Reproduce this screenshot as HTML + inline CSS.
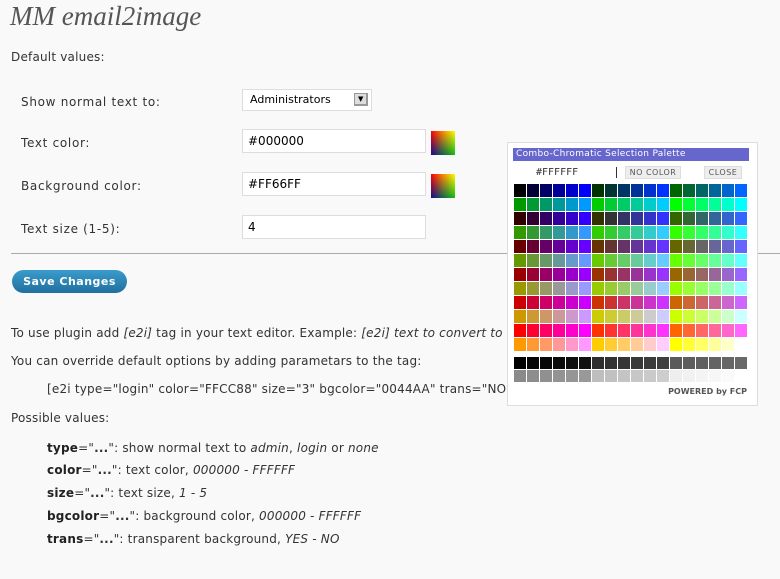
<!DOCTYPE html>
<html><head><meta charset="utf-8"><style>
body{margin:0;width:780px;height:579px;background:#f9f9f9;font-family:"DejaVu Sans","Liberation Sans",sans-serif;color:#333;position:relative;overflow:hidden}
.a{position:absolute;white-space:nowrap}
h1{position:absolute;left:10px;top:1px;margin:0;font:italic 27px "Liberation Serif",serif;color:#555}
.t{font-size:12px;letter-spacing:0.2px}
.l{font-size:12px;letter-spacing:0.7px}
.in{position:absolute;left:242px;width:182px;height:22px;background:#fff;border:1px solid #ddd;font-size:12px;color:#000;line-height:22px;text-indent:5px}
.sw{position:absolute;left:431px;width:24px;height:24px;background:linear-gradient(to right,#1a0a90,#10c010)}
.sw div{width:100%;height:100%;background:linear-gradient(to right,#f00,#f80 50%,#ff0);-webkit-mask-image:linear-gradient(#000,transparent);mask-image:linear-gradient(#000,transparent)}
#pal{position:absolute;left:507px;top:142px;width:249px;height:262px;background:#fff;border:1px solid #ddd}
table{border-collapse:separate;border-spacing:1px;position:absolute;left:5px}
td{width:12px;height:13px;padding:0}
.b{font-weight:bold;color:#222}
i{color:#333}
</style></head><body>
<h1>MM email2image</h1>
<div class="a t" style="left:11px;top:50px">Default values:</div>
<div class="a l" style="left:21px;top:95px">Show normal text to:</div>
<div class="a l" style="left:21px;top:136px">Text color:</div>
<div class="a l" style="left:21px;top:179px">Background color:</div>
<div class="a l" style="left:21px;top:222px">Text size (1-5):</div>
<div class="a" style="left:242px;top:89px;width:128px;height:20px;border:1px solid #ddd;background:#fff;font-size:11px;line-height:20px;text-indent:7px;color:#000">Administrators<div style="position:absolute;right:3px;top:3px;width:14px;height:13px;background:#ddd;border:1px solid #999;border-width:1px 2px 2px 1px;box-sizing:border-box;font-size:7px;line-height:11px;text-indent:3px">▼</div></div>
<div class="in" style="top:129px">#000000</div>
<div class="in" style="top:172px">#FF66FF</div>
<div class="in" style="top:215px">4</div>
<div class="sw" style="top:131px"><div></div></div>
<div class="sw" style="top:174px"><div></div></div>
<div class="a" style="left:11px;top:253px;width:769px;height:1px;background:#aaa"></div>
<div class="a" style="left:12px;top:270px;width:115px;height:23px;border-radius:12px;background:linear-gradient(#3a9ccb,#1f6f9e);color:#fff;font-weight:bold;font-size:11px;line-height:23px;text-align:center;letter-spacing:0.5px">Save Changes</div>
<div class="a t" style="left:11px;top:326px">To use plugin add <i>[e2i]</i> tag in your text editor. Example: <i>[e2i] text to convert to</i></div>
<div class="a t" style="left:11px;top:354px">You can override default options by adding parametars to the tag:</div>
<div class="a t" style="left:47px;top:382px">[e2i type="login" color="FFCC88" size="3" bgcolor="0044AA" trans="NO</div>
<div class="a t" style="left:11px;top:411px">Possible values:</div>
<div class="a t" style="left:47px;top:441px"><span class="b">type</span>="<b>...</b>": show normal text to <i>admin</i>, <i>login</i> or <i>none</i></div>
<div class="a t" style="left:47px;top:463px"><span class="b">color</span>="<b>...</b>": text color, <i>000000 - FFFFFF</i></div>
<div class="a t" style="left:47px;top:486px"><span class="b">size</span>="<b>...</b>": text size, <i>1 - 5</i></div>
<div class="a t" style="left:47px;top:509px"><span class="b">bgcolor</span>="<b>...</b>": background color, <i>000000 - FFFFFF</i></div>
<div class="a t" style="left:47px;top:532px"><span class="b">trans</span>="<b>...</b>": transparent background, <i>YES - NO</i></div>

<div id="pal">
<div class="a" style="left:5px;top:5px;width:236px;height:13px;background:#6666cc;color:#fff;font-size:9px;line-height:13px;text-indent:3px;letter-spacing:0.3px">Combo-Chromatic Selection Palette</div>
<div class="a" style="left:28px;top:24px;font:10px 'DejaVu Sans Mono',monospace;color:#333">#FFFFFF</div>
<div class="a" style="left:108px;top:24px;width:1px;height:11px;background:#333"></div>
<div class="a" style="left:117px;top:23px;width:56px;height:13px;background:#eee;border:1px solid #ddd;box-sizing:border-box;font-size:8px;line-height:11px;text-align:center;color:#555;letter-spacing:0.5px">NO COLOR</div>
<div class="a" style="left:196px;top:23px;width:38px;height:13px;background:#eee;border:1px solid #ddd;box-sizing:border-box;font-size:8px;line-height:11px;text-align:center;color:#555;letter-spacing:0.5px">CLOSE</div>
<table id="g" style="top:40px"></table>
<table id="h" style="top:213px"></table>
<div class="a" style="right:10px;top:244px;font-size:8px;color:#555;font-weight:bold">POWERED by FCP</div>
</div>
<script>
var v=['00','33','66','99','CC','FF'],g=document.getElementById('g'),s='';
for(var r=0;r<6;r++)for(var hh=0;hh<2;hh++){s+='<tr>';for(var k=0;k<3;k++)for(var b=0;b<6;b++)s+='<td style="background:#'+v[r]+v[hh*3+k]+v[b]+'"></td>';s+='</tr>';}
g.innerHTML=s;
var r1=[0,5,8,11,14,17,47,50,53,56,59,62,90,93,96,99,102,105],r2=[138,141,144,147,150,153,190,193,196,199,202,205,238,241,244,247,250,255];
function row(a){var t='<tr>';a.forEach(function(x){t+='<td style="height:12px;background:rgb('+x+','+x+','+x+')"></td>'});return t+'</tr>';}
document.getElementById('h').innerHTML=row(r1)+row(r2);
</script>
</body></html>
